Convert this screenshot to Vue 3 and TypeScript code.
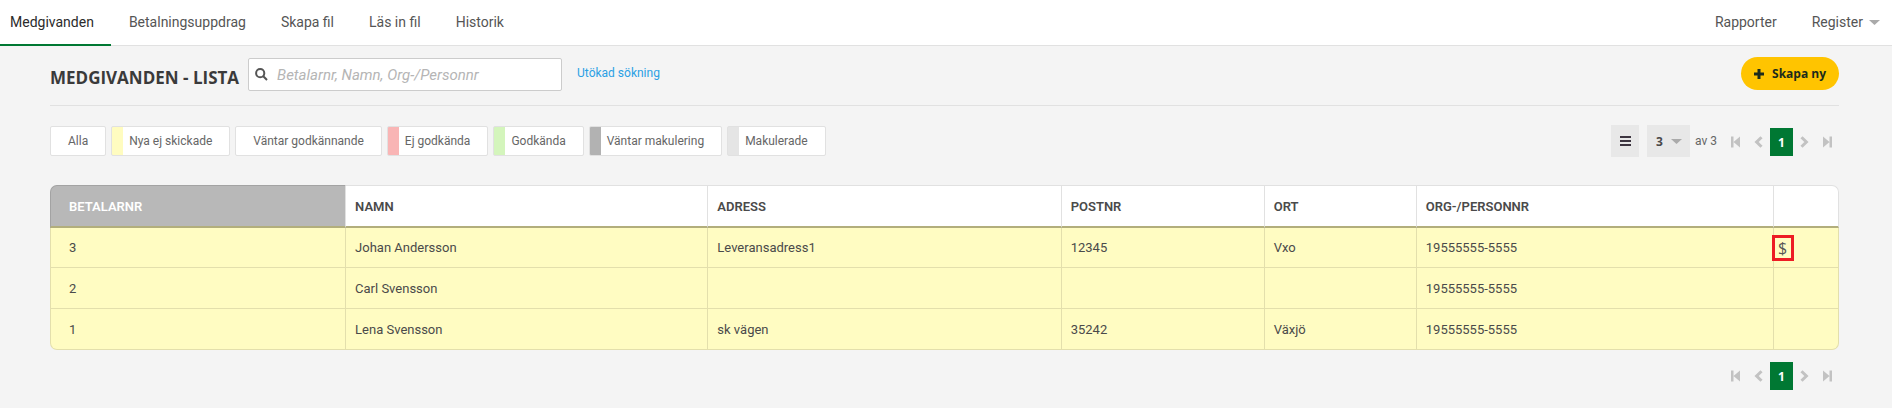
<script setup lang="ts">
import { ref } from 'vue'

interface Filter {
  label: string
  tone: string
}

interface Mandate {
  id: number
  name: string
  address: string
  zip: string
  city: string
  orgNr: string
  payment: boolean
}

const tabs: string[] = ['Medgivanden', 'Betalningsuppdrag', 'Skapa fil', 'Läs in fil', 'Historik']
const activeTab = ref('Medgivanden')

const filters: Filter[] = [
  { label: 'Alla', tone: '' },
  { label: 'Nya ej skickade', tone: 'yellow' },
  { label: 'Väntar godkännande', tone: '' },
  { label: 'Ej godkända', tone: 'red' },
  { label: 'Godkända', tone: 'green' },
  { label: 'Väntar makulering', tone: 'gray' },
  { label: 'Makulerade', tone: 'light' },
]

const columns: string[] = ['Betalarnr', 'Namn', 'Adress', 'Postnr', 'Ort', 'Org-/personnr', '']

const rows: Mandate[] = [
  { id: 3, name: 'Johan Andersson', address: 'Leveransadress1', zip: '12345', city: 'Vxo', orgNr: '19555555-5555', payment: true },
  { id: 2, name: 'Carl Svensson', address: '', zip: '', city: '', orgNr: '19555555-5555', payment: false },
  { id: 1, name: 'Lena Svensson', address: 'sk vägen', zip: '35242', city: 'Växjö', orgNr: '19555555-5555', payment: false },
]

const query = ref('')
const pageSize = ref('3')
const pagers: string[] = ['top', 'bottom']
</script>

<template>
  <div class="page">
    <nav class="nav">
      <a
        v-for="tab in tabs"
        :key="tab"
        href="#"
        class="tab"
        :class="{ active: tab === activeTab }"
        @click.prevent="activeTab = tab"
      >{{ tab }}</a>
      <span class="spacer"></span>
      <a href="#" class="tab">Rapporter</a>
      <a href="#" class="tab menu">Register
        <svg class="caret" width="11" height="5" viewBox="0 0 11 5" aria-hidden="true"><path d="M0 0h11L5.500 5z" /></svg>
      </a>
    </nav>

    <main class="content">
      <header class="head">
        <h1>MEDGIVANDEN - LISTA</h1>
        <label class="search">
          <svg width="13" height="13" viewBox="0 0 13 13" aria-hidden="true">
            <circle cx="5.200" cy="5.200" r="4.100" />
            <path d="M8.300 8.300L12 12" />
          </svg>
          <input v-model="query" type="text" aria-label="Sök" placeholder="Betalarnr, Namn, Org-/Personnr" />
        </label>
        <a href="#" class="advanced">Utökad sökning</a>
        <span class="spacer"></span>
        <button type="button" class="create">
          <svg width="10" height="10" viewBox="0 0 10 10" aria-hidden="true"><path d="M3.500 0h3v3.500H10v3H6.500V10h-3V6.500H0v-3h3.500z" /></svg>
          Skapa ny
        </button>
      </header>

      <div class="toolbar">
        <button v-for="f in filters" :key="f.label" type="button" class="filter" :class="f.tone">{{ f.label }}</button>
        <span class="spacer"></span>
        <button type="button" class="list-menu" aria-label="Meny">
          <svg width="11" height="10" viewBox="0 0 11 10" aria-hidden="true"><path d="M0 0h11v2H0zM0 4h11v2H0zM0 8h11v2H0z" /></svg>
        </button>
        <label class="size">
          <select v-model="pageSize" aria-label="Antal rader">
            <option>3</option>
          </select>
          <svg class="caret" width="11" height="5" viewBox="0 0 11 5" aria-hidden="true"><path d="M0 0h11L5.500 5z" /></svg>
        </label>
        <span class="total">av 3</span>
      </div>

      <table>
        <colgroup>
          <col v-for="(c, i) in columns" :key="c" :class="'c' + i" />
        </colgroup>
        <thead>
          <tr>
            <th v-for="c in columns" :key="c" scope="col">{{ c }}</th>
          </tr>
        </thead>
        <tbody>
          <tr v-for="r in rows" :key="r.id">
            <td>{{ r.id }}</td>
            <td>{{ r.name }}</td>
            <td>{{ r.address }}</td>
            <td>{{ r.zip }}</td>
            <td>{{ r.city }}</td>
            <td>{{ r.orgNr }}</td>
            <td class="action"><a v-if="r.payment" href="#" class="pay">$</a></td>
          </tr>
        </tbody>
      </table>

      <div v-for="p in pagers" :key="p" class="pager" :class="p">
        <button type="button" aria-label="Första">
          <svg width="9" height="12" viewBox="0 0 9 12"><path d="M0 0.500h2.500v11H0zM9 0.500v11L2.500 6z" /></svg>
        </button>
        <button type="button" aria-label="Föregående">
          <svg width="9" height="12" viewBox="0 0 9 12"><path class="line" d="M7.500 1.200L2.600 6L7.500 10.800" /></svg>
        </button>
        <button type="button" class="current">1</button>
        <button type="button" aria-label="Nästa">
          <svg width="9" height="12" viewBox="0 0 9 12"><path class="line" d="M1.500 1.200L6.400 6L1.500 10.800" /></svg>
        </button>
        <button type="button" aria-label="Sista">
          <svg width="9" height="12" viewBox="0 0 9 12"><path d="M6.500 0.500H9v11H6.500zM0 0.500v11L6.500 6z" /></svg>
        </button>
      </div>
    </main>
  </div>
</template>

<style>
body {
  background: #f4f4f4;
}
</style>

<style scoped>
.page {
  box-sizing: border-box;
  font-family: Roboto, "Liberation Sans", sans-serif;
  color: #4a4a4a;
}
a {
  text-decoration: none;
  color: inherit;
}
button,
select,
input {
  font: inherit;
  color: inherit;
  margin: 0;
  padding: 0;
  border: 0;
  box-sizing: border-box;
}
.spacer {
  flex: 1;
}
.nav {
  display: flex;
  gap: 1px;
  box-sizing: border-box;
  height: 46px;
  background: #fff;
  border-bottom: 1px solid #e1e1e1;
  padding-right: 12px;
}
.tab {
  display: flex;
  align-items: center;
  box-sizing: border-box;
  height: 46px;
  padding: 0 17px;
  font-size: 14px;
  color: #555;
  border-bottom: 2px solid transparent;
}
.tab:first-child {
  padding-left: 10px;
}
.tab.active {
  color: #2b2b2b;
  border-bottom-color: #007833;
}
.tab.menu {
  gap: 6px;
  padding-right: 0;
}
.caret {
  fill: #aaa;
}
.content {
  display: grid;
  margin: 0 53px 0 50px;
}
.content > * {
  grid-column: 1;
}
.head {
  display: flex;
  align-items: center;
  box-sizing: border-box;
  height: 60px;
  padding-bottom: 2px;
  border-bottom: 1px solid #e1e1e1;
}
h1 {
  margin: 6px 9px 0 0;
  font: 700 17px/20px "Open Sans", sans-serif;
  color: #3a3a3a;
}
.search {
  display: flex;
  align-items: center;
  box-sizing: border-box;
  width: 314px;
  height: 33px;
  padding: 0 6px;
  gap: 9px;
  background: #fff;
  border: 1px solid #ccc;
  border-radius: 2px;
}
.search svg {
  flex: none;
  fill: none;
  stroke: #555;
  stroke-width: 2;
}
.search input {
  flex: 1;
  min-width: 0;
  font-size: 15px;
  background: none;
  outline: 0;
}
.search input::placeholder {
  color: #b5b5b5;
  font-style: italic;
  opacity: 1;
}
.advanced {
  margin: 0 0 4px 15px;
  font-size: 12px;
  color: #2ba0e4;
}
.create {
  display: flex;
  align-items: center;
  gap: 8px;
  height: 33px;
  margin-bottom: 2px;
  padding: 0 13px;
  border-radius: 17px;
  background: #ffc400;
  color: #1c2b1c;
  font: 700 12px "Open Sans", sans-serif;
}
.create svg {
  fill: #1c2b1c;
}
.toolbar {
  display: flex;
  align-items: center;
  grid-row: 2;
  gap: 5px;
  height: 32px;
  margin-top: 19px;
  padding-right: 122px;
}
.filter {
  height: 30px;
  padding: 0 17px;
  font-size: 12px;
  color: #666;
  background: #fff;
  border: 1px solid #e1e1e1;
  border-radius: 2px;
}
.filter.yellow {
  background: linear-gradient(90deg, #fffcc0 11px, #fff 11px);
}
.filter.red {
  background: linear-gradient(90deg, #f9b5b5 11px, #fff 11px);
}
.filter.green {
  background: linear-gradient(90deg, #d4f5bc 11px, #fff 11px);
}
.filter.gray {
  background: linear-gradient(90deg, #b2b2b2 11px, #fff 11px);
}
.filter.light {
  background: linear-gradient(90deg, #e5e5e5 11px, #fff 11px);
}
.list-menu {
  display: flex;
  align-items: center;
  justify-content: center;
  width: 28px;
  height: 32px;
  background: #e8e8e8;
}
.list-menu svg {
  fill: #3d3540;
}
.size {
  display: grid;
  align-items: center;
  width: 43px;
  height: 32px;
  margin-left: 3px;
  background: #e8e8e8;
}
.size > * {
  grid-area: 1 / 1;
}
.size select {
  appearance: none;
  width: 43px;
  height: 32px;
  padding-left: 9px;
  font: 700 12px "Open Sans", sans-serif;
  background: none;
}
.size .caret {
  justify-self: end;
  margin-right: 8px;
  pointer-events: none;
}
.total {
  font-size: 12px;
  color: #666;
}
.pager {
  display: flex;
  align-items: center;
  justify-self: end;
  height: 28px;
}
.pager.top {
  grid-row: 2;
  align-self: end;
  margin-bottom: 1px;
}
.pager.bottom {
  margin-top: 12px;
}
.pager button {
  display: flex;
  align-items: center;
  justify-content: center;
  width: 23px;
  height: 28px;
  background: none;
}
.pager button.current {
  background: #007833;
  color: #fff;
  font: 700 12px "Open Sans", sans-serif;
}
.pager svg {
  fill: #c2c2c2;
}
.pager .line {
  fill: none;
  stroke: #c2c2c2;
  stroke-width: 3;
}
table {
  width: 100%;
  margin-top: 28px;
  table-layout: fixed;
  border-collapse: separate;
  border-spacing: 0;
}
.c0 { width: 16.550%; }
.c1 { width: 20.250%; }
.c2 { width: 19.750%; }
.c3 { width: 11.350%; }
.c4 { width: 8.500%; }
.c5 { width: 19.950%; }
.c6 { width: 3.650%; }
th,
td {
  box-sizing: border-box;
  height: 41px;
  padding: 0 9px;
  text-align: left;
  border-right: 1px solid #e1e1e1;
}
th {
  height: 43px;
  font-size: 13px;
  font-weight: 600;
  text-transform: uppercase;
  background: #fff;
  border-top: 1px solid #e1e1e1;
  border-bottom: 2px solid #b2ae7c;
}
td {
  font-size: 13px;
  background: #fffcc2;
  border-right-color: #e3dfac;
  border-bottom: 1px solid #e3dfac;
}
tbody tr:first-child td {
  height: 40px;
}
th:first-child {
  padding-left: 18px;
  color: #fff;
  background: #b8b8b8;
  border-color: #a3a3a3;
  border-right-color: #e1e1e1;
  border-bottom-color: #b2ae7c;
  border-left: 1px solid #a3a3a3;
  border-top-left-radius: 7px;
}
th:last-child {
  border-top-right-radius: 7px;
}
td:first-child {
  padding-left: 18px;
  border-left: 1px solid #e3dfac;
}
tr:last-child td:first-child {
  border-bottom-left-radius: 7px;
}
tr:last-child td:last-child {
  border-bottom-right-radius: 7px;
}
td.action {
  padding: 0;
}
.pay {
  display: flex;
  align-items: center;
  justify-content: center;
  box-sizing: border-box;
  width: 22px;
  height: 26px;
  margin-left: -2px;
  border: 3px solid #ed1c24;
  color: #555;
  font: 400 16px "Open Sans", sans-serif;
}
</style>
